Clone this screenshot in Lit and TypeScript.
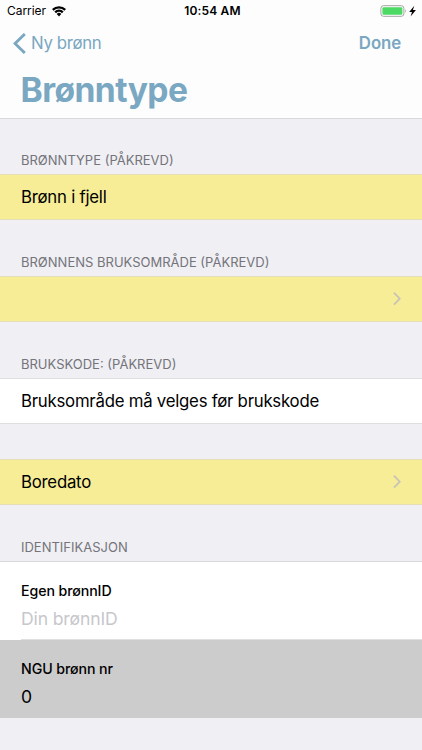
import { LitElement, html, css, svg, nothing } from "lit";
import { customElement, property } from "lit/decorators.js";

@customElement("status-bar")
export class StatusBar extends LitElement {
  static styles = css`
    :host { display: grid; grid-template-columns: 1fr auto 1fr; align-items: center; height: 22px; padding: 0 5px 0 7px; color: #000; font-size: 12px; line-height: 22px; }
    .left { display: flex; align-items: center; gap: 6px; letter-spacing: -0.05px; }
    .time { font-weight: 600; letter-spacing: 0.15px; padding-left: 1px; }
    .right { display: flex; align-items: center; justify-content: flex-end; }
    svg { display: block; }
  `;
  render() {
    return html`
      <div class="left">
        <span>Carrier</span>
        <svg width="14" height="11" viewBox="0 0 14 11">
          <path d="M0 3.1A9.9 9.9 0 0 1 14 3.1L12.4 4.8A7.6 7.6 0 0 0 1.6 4.8Z" />
          <path d="M2.4 5.5A6.5 6.5 0 0 1 11.6 5.5L10 7.2A4.3 4.3 0 0 0 4 7.2Z" />
          <path d="M4.7 8A3.2 3.2 0 0 1 9.3 8L7 10.4Z" />
        </svg>
      </div>
      <span class="time">10:54 AM</span>
      <div class="right">
        <svg width="37" height="12" viewBox="0 0 37 12">
          <rect x=".9" y=".7" width="23" height="10.6" rx="2.6" fill="#fff" stroke="#a3a3a3" />
          <rect x="2.4" y="2.2" width="20" height="7.6" rx="1.2" fill="#4cd964" />
          <path d="M25.4 4.1Q27 6 25.4 7.9Z" fill="#a3a3a3" />
          <path d="M34.3 .7L29.2 6.9H32L30.6 11.5L35.9 5.1H32.9Z" fill="#000" />
        </svg>
      </div>
    `;
  }
}

@customElement("nav-header")
export class NavHeader extends LitElement {
  static styles = css`
    :host { display: block; height: 97px; box-sizing: border-box; color: #7aa7c1; border-bottom: 1px solid #d9d9de; }
    .bar { display: flex; justify-content: space-between; height: 43px; padding: 0 21px 0 13px; font-size: 16.8px; line-height: 43px; }
    .back { display: flex; align-items: center; gap: 5px; letter-spacing: -0.35px; }
    .done { font-weight: 600; letter-spacing: -0.1px; }
    h1 { margin: 0; padding-left: 20.5px; font-size: 33.6px; line-height: 50px; font-weight: 700; letter-spacing: -0.55px; }
    svg { display: block; }
  `;
  render() {
    return html`
      <div class="bar">
        <span class="back">
          <svg width="13" height="21" viewBox="0 0 13 21"><path d="M11.8 1L2 10.5L11.8 20" fill="none" stroke="currentColor" stroke-width="2.9" /></svg>
          <span>Ny brønn</span>
        </span>
        <span class="done">Done</span>
      </div>
      <h1>Brønntype</h1>
    `;
  }
}

@customElement("form-row")
export class FormRow extends LitElement {
  @property() label = "";
  @property({ type: Boolean }) chevron = false;
  static styles = css`
    :host { display: flex; align-items: center; justify-content: space-between; height: 46px; box-sizing: border-box; padding: 0 21px; font-size: 16.8px; color: #000; background: #fff; border: solid #dedee0; border-width: 1px 0; }
    :host([required]) { background: #f7ed97; border-color: #e5dfb9; }
    span { letter-spacing: -0.24px; line-height: 44px; }
    svg { display: block; }
  `;
  render() {
    return html`<span>${this.label}</span>
      ${this.chevron
        ? html`<svg width="8" height="14" viewBox="0 0 8 14">${svg`<path d="M.9 .7L6.8 6.7L.9 12.7" fill="none" stroke="#c7c3b7" stroke-width="1.8" />`}</svg>`
        : nothing}`;
  }
}

@customElement("app-root")
export class AppRoot extends LitElement {
  static styles = css`
    :host { display: block; height: 750px; overflow: hidden; background: #efeff4; font-family: Inter, "Liberation Sans", sans-serif; }
    .top { height: 119px; background: #fdfdfd; }
    .caption { display: block; padding: 0 21px; height: 26px; margin-top: 30px; color: #74747a; font-size: 13px; line-height: 24px; letter-spacing: 0; }
    .first { margin-top: 29px; }
    .gap { height: 35px; }
    .fields { border-top: 1px solid #d8d8dc; background: #fff; }
    .field { display: flex; flex-direction: column; height: 78px; box-sizing: border-box; padding: 18px 21px 0; }
    .name { font-size: 14.2px; font-weight: 500; line-height: 22px; letter-spacing: -0.1px; }
    .value { font-size: 17.6px; line-height: 30px; letter-spacing: -0.15px; margin-top: 2px; }
    .placeholder { color: #c7c7cc; }
    .value.placeholder { height: 35px; border-bottom: 1px solid #e0e0e2; margin-right: -21px; }
    .disabled { background: #ccc; }
  `;
  render() {
    return html`
      <div class="top"><status-bar></status-bar><nav-header></nav-header></div>
      <span class="caption first">BRØNNTYPE (PÅKREVD)</span>
      <form-row required label="Brønn i fjell"></form-row>
      <span class="caption">BRØNNENS BRUKSOMRÅDE (PÅKREVD)</span>
      <form-row required chevron></form-row>
      <span class="caption">BRUKSKODE: (PÅKREVD)</span>
      <form-row label="Bruksområde må velges før brukskode"></form-row>
      <div class="gap"></div>
      <form-row required chevron label="Boredato"></form-row>
      <span class="caption">IDENTIFIKASJON</span>
      <div class="fields">
        <div class="field"><span class="name">Egen brønnID</span><span class="value placeholder">Din brønnID</span></div>
        <div class="field disabled"><span class="name">NGU brønn nr</span><span class="value">0</span></div>
      </div>
    `;
  }
}
